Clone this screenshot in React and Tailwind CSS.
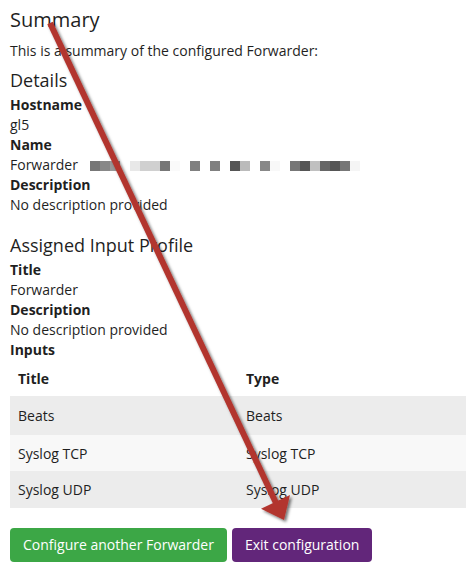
import React from "react";

const blurCells = [
  "#777777", "#888888", "#999999", null, "#e8e8e8", "#d0d0d0", "#d0d0d0", "#777777",
  "#fafafa", null, "#808080", null, "#808080", null, "#555555", "#bbbbbb", null,
  "#888888", "#f8f8f8", null, "#777777", "#555555", "#c0c0c0", "#666666", "#555555",
  "#777777", "#f5f5f5",
];

const inputs = [
  { title: "Beats", type: "Beats", bg: "bg-[#ececec]", h: "h-[39px]" },
  { title: "Syslog TCP", type: "Syslog TCP", bg: "bg-[#f8f8f8]", h: "h-[36px]" },
  { title: "Syslog UDP", type: "Syslog UDP", bg: "bg-[#ececec]", h: "h-[37px]" },
];

function Field({ label, children }) {
  return (
    <>
      <div className="font-bold leading-5">{label}</div>
      <div className="leading-5">{children}</div>
    </>
  );
}

function Arrow() {
  // annotation drawn on top of the screenshot
  return (
    <svg
      className="absolute inset-0 pointer-events-none"
      width="476"
      height="574"
      viewBox="0 0 476 574"
    >
      <defs>
        <filter id="shadow" x="-20%" y="-20%" width="140%" height="140%">
          <feDropShadow dx="2" dy="2" stdDeviation="1.6" floodColor="#000" floodOpacity="0.55" />
        </filter>
      </defs>
      <g filter="url(#shadow)" fill="#b2352f" stroke="none">
        <line x1="50" y1="23" x2="276" y2="503" stroke="#b2352f" strokeWidth="6" />
        <polygon points="261,508.7 290,495.1 284,520" />
      </g>
    </svg>
  );
}

export default function App() {
  return (
    <div className="relative w-[476px] h-[574px] bg-white overflow-hidden px-[10px] text-[14px] text-[#1f1f1f] font-['Open_Sans',sans-serif]">
      <h2 className="mt-[8px] text-[20px] leading-[24px] font-normal">Summary</h2>
      <p className="mt-[9px] leading-5">This is a summary of the configured Forwarder:</p>

      <h3 className="mt-[8px] text-[18px] leading-[22px] font-normal">Details</h3>
      <div className="mt-[4px]">
        <Field label="Hostname">gl5</Field>
        <div className="font-bold leading-5">Name</div>
        <div className="leading-5 flex items-center">
          <span>Forwarder</span>
          <span className="flex ml-[12px] mt-[1px]">
            {blurCells.map((c, i) => (
              <span
                key={i}
                className="block w-[10px] h-[10px]"
                style={{ backgroundColor: c || "transparent" }}
              />
            ))}
          </span>
        </div>
        <Field label="Description">No description provided</Field>
      </div>

      <h3 className="mt-[19px] text-[18px] leading-[22px] font-normal">Assigned Input Profile</h3>
      <div className="mt-[4px]">
        <Field label="Title">Forwarder</Field>
        <Field label="Description">No description provided</Field>
        <div className="font-bold leading-5">Inputs</div>
      </div>

      <div className="w-[456px]">
        <div className="grid grid-cols-2 h-[36px] items-center font-bold">
          <div className="px-2">Title</div>
          <div className="px-2">Type</div>
        </div>
        {inputs.map((row) => (
          <div key={row.title} className={`grid grid-cols-2 items-center ${row.bg} ${row.h}`}>
            <div className="px-2">{row.title}</div>
            <div className="px-2">{row.type}</div>
          </div>
        ))}
      </div>

      <div className="mt-[20px] flex gap-[5px]">
        <button className="h-[34px] px-[13px] rounded bg-[#3ca746] text-white leading-5">
          Configure another Forwarder
        </button>
        <button className="h-[34px] px-[13px] rounded bg-[#62267a] text-white leading-5">
          Exit configuration
        </button>
      </div>

      <Arrow />
    </div>
  );
}
